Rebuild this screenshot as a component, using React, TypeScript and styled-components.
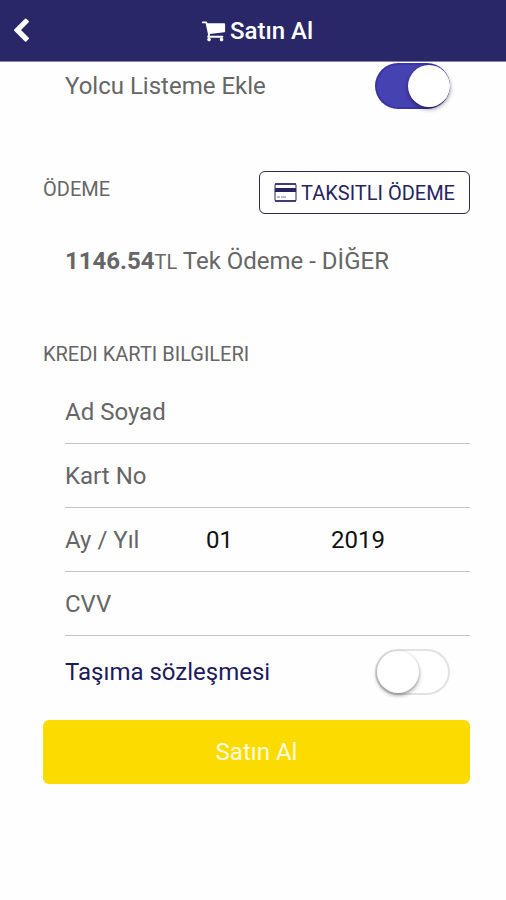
import React, { useState } from "react";
import styled, { createGlobalStyle } from "styled-components";

const GlobalStyle = createGlobalStyle`
  * { box-sizing: border-box; }
  body {
    margin: 0;
    background: #fefefe;
    color: #666;
    font-family: Roboto, "Noto Sans", sans-serif;
    font-size: 24px;
  }
  button, input, select { font: inherit; }
`;

const Header = styled.header`
  display: grid;
  grid-template-columns: 48px 1fr 48px;
  align-items: center;
  height: 62px;
  background: #2a2768;
  border-bottom: 1px solid #8583a8;
  color: #fff;
`;

const BackButton = styled.button`
  display: flex;
  padding: 0 0 0 8px;
  border: 0;
  background: none;
  color: inherit;
  cursor: pointer;
`;

const Title = styled.h1`
  display: flex;
  align-items: center;
  justify-content: center;
  gap: 4px;
  margin: 0;
  padding-left: 8px;
  font-size: 24px;
  font-weight: 500;
`;

const Content = styled.main`
  padding: 0 36px 36px 43px;
`;

const SwitchRow = styled.div<{ $tall?: boolean }>`
  display: flex;
  align-items: center;
  justify-content: space-between;
  height: ${(p) => (p.$tall ? 72 : 48)}px;
  padding: 0 20px 0 22px;
`;

const TermsLink = styled.a`
  color: #1d1a5c;
  text-decoration: none;
`;

const Switch = styled.input`
  appearance: none;
  display: flex;
  align-items: center;
  flex: none;
  width: 75px;
  height: 46px;
  margin: 0;
  padding: 0;
  border: 2px solid #e2e2e2;
  border-radius: 23px;
  background: #fff;
  cursor: pointer;

  &::before {
    content: "";
    width: 42px;
    height: 42px;
    border-radius: 50%;
    background: #fff;
    box-shadow: 0 2px 4px rgba(0, 0, 0, 0.45);
  }

  &:checked {
    justify-content: flex-end;
    border-color: #3a34a6;
    border-right-width: 0;
    background: #4642b2;
  }
`;

const SectionHead = styled.div<{ $gap: number }>`
  display: flex;
  align-items: flex-start;
  justify-content: space-between;
  margin-top: ${(p) => p.$gap}px;
`;

const SectionTitle = styled.h2`
  margin: 0;
  font-size: 20px;
  font-weight: 400;
  line-height: 36px;
`;

const InstallmentButton = styled.button`
  display: flex;
  align-items: center;
  gap: 4px;
  height: 43px;
  padding: 0 14px;
  border: 1px solid #2b2a48;
  border-radius: 6px;
  background: #fff;
  color: #262360;
  font-size: 20px;
  cursor: pointer;
`;

const Price = styled.p`
  margin: 15px 0 0 22px;
  line-height: 64px;

  strong { font-weight: 700; }
  small { font-size: 20px; }
`;

const FieldList = styled.div`
  margin: 8px 0 0 22px;
`;

const Field = styled.div`
  display: flex;
  align-items: center;
  height: 64px;
  border-bottom: 1px solid #c4c4c4;
`;

const FieldLabel = styled.label`
  flex: none;
  width: 141px;
`;

const TextInput = styled.input`
  flex: 1;
  min-width: 0;
  height: 100%;
  padding: 0;
  border: 0;
  outline: 0;
  background: none;
  color: #111;
`;

const Picker = styled.select<{ $grow: number }>`
  appearance: none;
  flex: ${(p) => p.$grow} 1 0;
  min-width: 0;
  padding: 0;
  border: 0;
  background: none;
  color: #111;
`;

const BuyButton = styled.button`
  display: block;
  width: 100%;
  height: 64px;
  margin-top: 12px;
  padding: 0;
  border: 0;
  border-radius: 6px;
  background: #fcdb00;
  color: #fffbe0;
  cursor: pointer;
`;

const ChevronIcon = () => (
  <svg width="26" height="26" viewBox="0 0 1792 1792" fill="currentColor" aria-hidden="true">
    <path d="M1427 301l-531 531 531 531q19 19 19 45t-19 45l-166 166q-19 19-45 19t-45-19l-742-742q-19-19-19-45t19-45l742-742q19-19 45-19t45 19l166 166q19 19 19 45t-19 45z" />
  </svg>
);

const CartIcon = () => (
  <svg width="25" height="25" viewBox="0 0 1792 1792" fill="currentColor" aria-hidden="true">
    <path d="M704 1536q0 52-38 90t-90 38-90-38-38-90 38-90 90-38 90 38 38 90zm896 0q0 52-38 90t-90 38-90-38-38-90 38-90 90-38 90 38 38 90zm128-1088v512q0 24-16.500 42.500t-40.500 21.500l-1044 122q13 60 13 70 0 16-24 64h920q26 0 45 19t19 45-19 45-45 19h-1024q-26 0-45-19t-19-45q0-11 8-31.500t16-36 21.500-40 15.500-29.500l-177-823h-204q-26 0-45-19t-19-45 19-45 45-19h256q16 0 28.500 6.500t19.500 15.500 13 24.500 8 26 5.500 29.500 4.500 26h1201q26 0 45 19t19 45z" />
  </svg>
);

const CardIcon = () => (
  <svg width="23" height="19" viewBox="0 0 23 19" aria-hidden="true">
    <rect x="1" y="1" width="21" height="17" rx="1" fill="none" stroke="currentColor" strokeWidth="1" />
    <path d="M1 1h21M1 18h21" stroke="currentColor" strokeWidth="1.600" />
    <path d="M1 7h21" stroke="currentColor" strokeWidth="4" />
    <path d="M3 14h3M7 14h5" stroke="currentColor" strokeWidth="1" opacity="0.600" />
  </svg>
);

const MONTHS = Array.from({ length: 12 }, (_, i) => String(i + 1).padStart(2, "0"));
const YEARS = Array.from({ length: 12 }, (_, i) => String(2019 + i));

export default function App() {
  const [saved, setSaved] = useState(true);
  const [agreed, setAgreed] = useState(false);

  return (
    <>
      <GlobalStyle />
      <Header>
        <BackButton type="button" aria-label="Geri">
          <ChevronIcon />
        </BackButton>
        <Title>
          <CartIcon />
          <span>Satın Al</span>
        </Title>
      </Header>
      <Content lang="tr">
        <SwitchRow>
          <label htmlFor="save">Yolcu Listeme Ekle</label>
          <Switch id="save" type="checkbox" role="switch" checked={saved} onChange={(e) => setSaved(e.target.checked)} />
        </SwitchRow>

        <SectionHead $gap={61}>
          <SectionTitle>ÖDEME</SectionTitle>
          <InstallmentButton type="button">
            <CardIcon />
            <span>TAKSITLI ÖDEME</span>
          </InstallmentButton>
        </SectionHead>
        <Price>
          <strong>1146.54</strong>
          <small>TL</small> Tek Ödeme - DİĞER
        </Price>

        <SectionHead $gap={42}>
          <SectionTitle>KREDI KARTI BILGILERI</SectionTitle>
        </SectionHead>
        <FieldList>
          <Field>
            <FieldLabel htmlFor="name">Ad Soyad</FieldLabel>
            <TextInput id="name" type="text" />
          </Field>
          <Field>
            <FieldLabel htmlFor="card">Kart No</FieldLabel>
            <TextInput id="card" type="text" inputMode="numeric" />
          </Field>
          <Field>
            <FieldLabel htmlFor="month">Ay / Yıl</FieldLabel>
            <Picker $grow={9} id="month" defaultValue="01">
              {MONTHS.map((m) => <option key={m}>{m}</option>)}
            </Picker>
            <Picker $grow={10} aria-label="Yıl" defaultValue="2019">
              {YEARS.map((y) => <option key={y}>{y}</option>)}
            </Picker>
          </Field>
          <Field>
            <FieldLabel htmlFor="cvv">CVV</FieldLabel>
            <TextInput id="cvv" type="text" inputMode="numeric" />
          </Field>
        </FieldList>

        <SwitchRow $tall>
          <TermsLink href="#sozlesme" id="terms">Taşıma sözleşmesi</TermsLink>
          <Switch type="checkbox" role="switch" aria-labelledby="terms" checked={agreed} onChange={(e) => setAgreed(e.target.checked)} />
        </SwitchRow>
        <BuyButton type="submit">Satın Al</BuyButton>
      </Content>
    </>
  );
}
